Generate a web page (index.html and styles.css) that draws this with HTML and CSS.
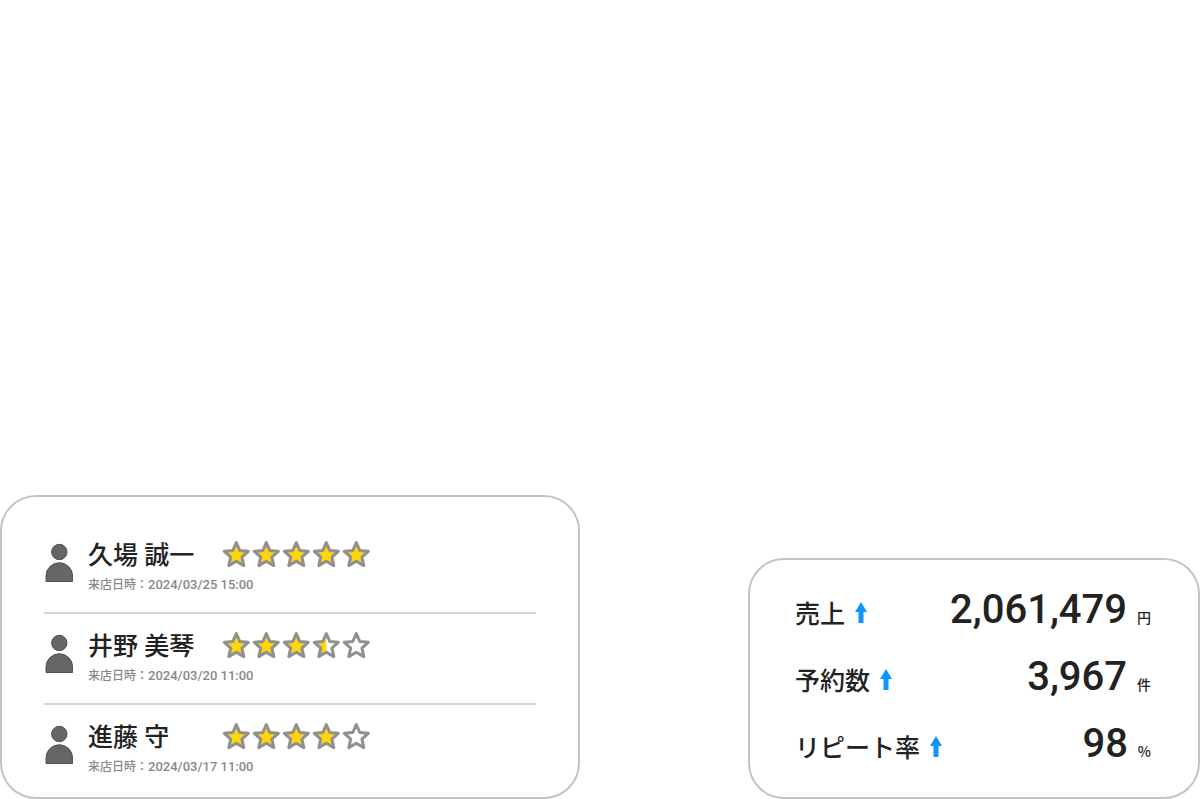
FILE: index.html
```html
<!DOCTYPE html>
<html lang="ja">

<head>
  <meta charset="UTF-8">
  <meta name="viewport" content="width=device-width, initial-scale=1.0">
  <title>来店レビュー</title>
  <link rel="stylesheet" href="styles.css">
</head>

<body>

  <!-- shared icons -->
  <svg class="icon-defs" aria-hidden="true">
    <symbol id="person" viewBox="0 0 28 40">
      <circle cx="14.300" cy="9" r="7.700" />
      <path d="M1 38.500V33a13.300 13.300 0 0 1 26.600 0v5.500z" />
    </symbol>
    <symbol id="star" viewBox="0 0 28 28">
      <path d="M14.300 2.500l3.500 8 8.500 .8-6.400 5.800 1.900 8.500L14.300 21.200 6.800 25.600l1.900-8.500L2.300 11.300l8.500-.8z" />
    </symbol>
    <symbol id="star-half" viewBox="0 0 28 28">
      <path class="half" d="M14.300 2.500V21.200L6.800 25.600l1.900-8.500L2.300 11.300l8.500-.8z" />
      <path class="outline" d="M14.300 2.500l3.500 8 8.500 .8-6.400 5.800 1.900 8.500L14.300 21.200 6.800 25.600l1.900-8.500L2.300 11.300l8.500-.8z" />
    </symbol>
    <symbol id="arrow-up" viewBox="0 0 12 21">
      <path d="M6 0l6 10H8.500v11h-5V10H0z" />
    </symbol>
  </svg>

  <main class="dashboard">
    <ul class="card reviews">
      <li class="review">
        <svg class="person"><use href="#person" /></svg>
        <div class="visit">
          <h2 class="name">久場 誠一</h2>
          <p class="date">来店日時：<time datetime="2024-03-25T15:00">2024/03/25 15:00</time></p>
        </div>
        <div class="stars" role="img" aria-label="5">
          <svg class="star full"><use href="#star" /></svg>
          <svg class="star full"><use href="#star" /></svg>
          <svg class="star full"><use href="#star" /></svg>
          <svg class="star full"><use href="#star" /></svg>
          <svg class="star full"><use href="#star" /></svg>
        </div>
      </li>
      <li class="review">
        <svg class="person"><use href="#person" /></svg>
        <div class="visit">
          <h2 class="name">井野 美琴</h2>
          <p class="date">来店日時：<time datetime="2024-03-20T11:00">2024/03/20 11:00</time></p>
        </div>
        <div class="stars" role="img" aria-label="3.5">
          <svg class="star full"><use href="#star" /></svg>
          <svg class="star full"><use href="#star" /></svg>
          <svg class="star full"><use href="#star" /></svg>
          <svg class="star"><use href="#star-half" /></svg>
          <svg class="star"><use href="#star" /></svg>
        </div>
      </li>
      <li class="review">
        <svg class="person"><use href="#person" /></svg>
        <div class="visit">
          <h2 class="name">進藤 守</h2>
          <p class="date">来店日時：<time datetime="2024-03-17T11:00">2024/03/17 11:00</time></p>
        </div>
        <div class="stars" role="img" aria-label="4">
          <svg class="star full"><use href="#star" /></svg>
          <svg class="star full"><use href="#star" /></svg>
          <svg class="star full"><use href="#star" /></svg>
          <svg class="star full"><use href="#star" /></svg>
          <svg class="star"><use href="#star" /></svg>
        </div>
      </li>
    </ul>

    <dl class="card stats">
      <div class="stat">
        <dt class="label">売上 <svg class="arrow"><use href="#arrow-up" /></svg></dt>
        <dd class="value">2,061,479 <span class="unit">円</span></dd>
      </div>
      <div class="stat">
        <dt class="label">予約数 <svg class="arrow"><use href="#arrow-up" /></svg></dt>
        <dd class="value">3,967 <span class="unit">件</span></dd>
      </div>
      <div class="stat">
        <dt class="label">リピート率 <svg class="arrow"><use href="#arrow-up" /></svg></dt>
        <dd class="value">98 <span class="unit">%</span></dd>
      </div>
    </dl>
  </main>

</body>

</html>
```

FILE: styles.css
```css
* {
  box-sizing: border-box;
}

body {
  margin: 0;
  background-color: #fff;
  color: #222;
  font-family: Roboto, "Noto Sans CJK JP", sans-serif;
}

.icon-defs {
  display: none;
}

.dashboard {
  display: flex;
  justify-content: space-between;
  align-items: flex-end;
  gap: 24px;
  min-height: 100vh;
}

.card {
  margin: 0;
  border: 2px solid #c4c4c4;
  border-radius: 36px;
}

/* reviews */
.reviews {
  flex: 0 1 580px;
  padding: 24px 42px 3px;
  list-style: none;
}

.review {
  display: flex;
  align-items: flex-start;
  height: 91px;
  padding-top: 17px;
  border-top: 2px solid #d5d5d5;
}

.review:first-child {
  border-color: transparent;
}

.person {
  width: 28px;
  height: 40px;
  margin: 3px 15px 0 1px;
  fill: #666;
  stroke: #505050;
}

.visit {
  width: 134px;
  white-space: nowrap;
}

.name {
  margin: 0;
  font-size: 25px;
  font-weight: 500;
  line-height: 32px;
}

.date {
  margin: 4px 0 0;
  color: #888;
  font-size: 12px;
  font-weight: 500;
  line-height: 18px;
}

.date time {
  font-size: 13px;
}

.stars {
  display: flex;
  gap: 2px;
}

.star {
  width: 28px;
  height: 28px;
  fill: #fff;
  stroke: #909092;
  stroke-width: 3px;
  stroke-linejoin: round;
}

.full {
  fill: #ffd60a;
}

.half {
  fill: #ffd60a;
  stroke: none;
}

.outline {
  fill: none;
}

/* stats */
.stats {
  flex: 0 1 452px;
  padding: 16px 47px 20px 45px;
}

.stat {
  display: flex;
  justify-content: space-between;
  align-items: baseline;
  height: 67px;
}

.label {
  font-size: 25px;
  font-weight: 500;
  white-space: nowrap;
}

.arrow {
  width: 12px;
  height: 21px;
  margin-left: 4px;
  fill: #0a95ff;
}

.value {
  margin: 0;
  font-size: 40px;
  font-weight: 500;
  line-height: 67px;
  white-space: nowrap;
}

.unit {
  font-family: "Noto Sans CJK JP", sans-serif;
  font-size: 14px;
}
```
